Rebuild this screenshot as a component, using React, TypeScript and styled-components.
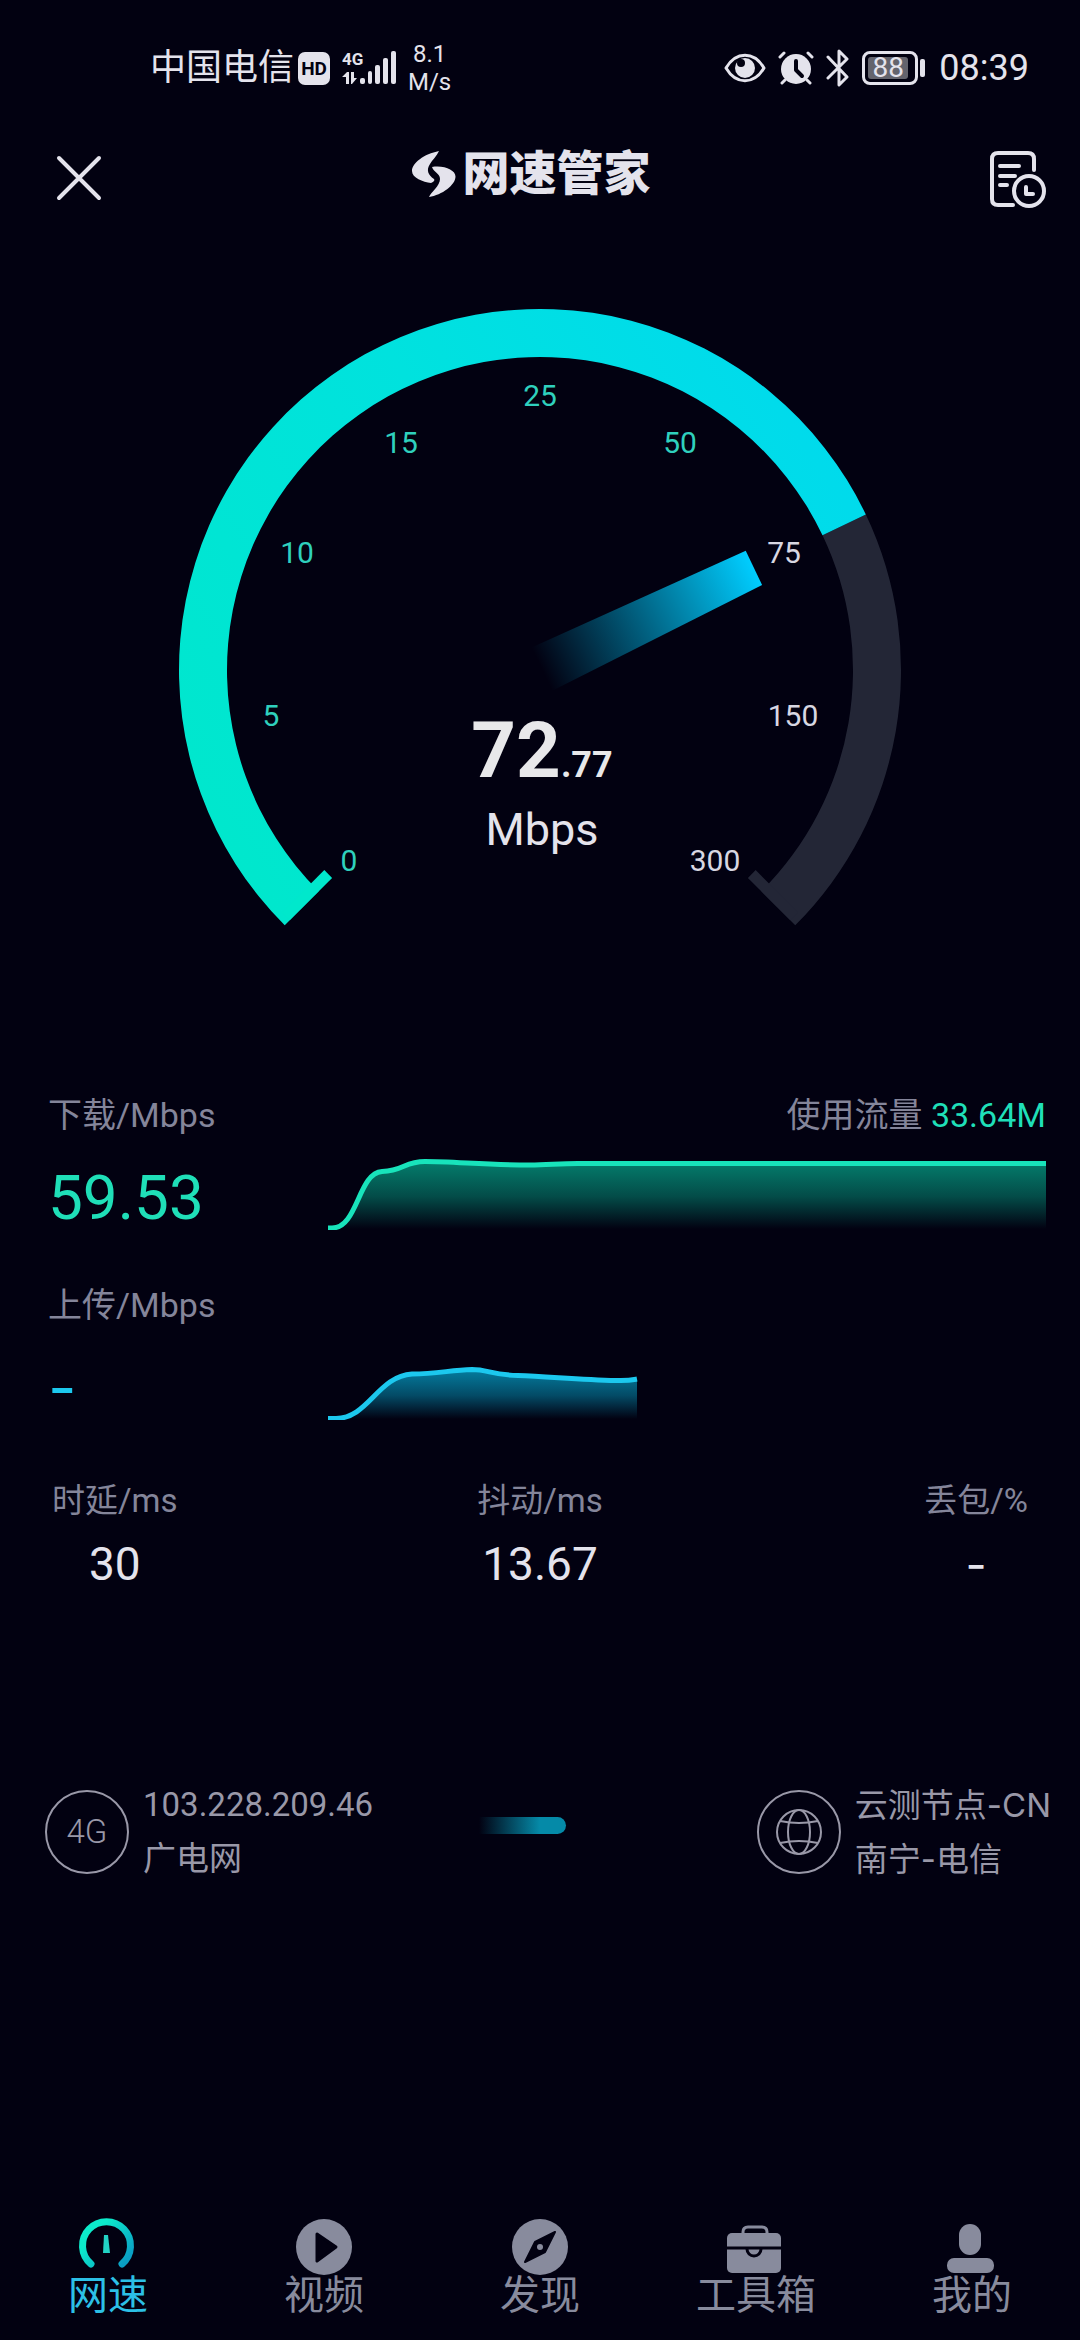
import React from "react";
import styled, { createGlobalStyle } from "styled-components";

const colors = {
  bg: "#020111",
  text: "#e4e3ec",
  muted: "#84859a",
  soft: "#9998a8",
  green: "#1fdfb8",
  blue: "#1cc8ee",
  tick: "#2fd0bd",
  track: "#232636",
};

const sans = `Roboto, "Noto Sans CJK SC", sans-serif`;
const wideDash = `Inter, "Noto Sans CJK SC", sans-serif`;

const GlobalStyle = createGlobalStyle`
  *, *::before, *::after { box-sizing: border-box; }
  body { margin: 0; background: ${colors.bg}; }
  button { font: inherit; color: inherit; background: none; border: 0; padding: 0; cursor: pointer; }
  svg { display: block; }
`;

const Page = styled.div`
  display: flex;
  flex-direction: column;
  min-height: 100vh;
  background: ${colors.bg};
  color: ${colors.text};
  font-family: ${sans};
`;

/* Status bar */

const StatusBar = styled.div`
  display: flex;
  align-items: center;
  justify-content: space-between;
  height: 48px;
  margin-top: 44px;
  padding: 0 51px 0 150px;
`;

const StatusGroup = styled.div<{ $gap: number }>`
  display: flex;
  align-items: center;
  gap: ${(p) => p.$gap}px;
`;

const Carrier = styled.span`
  font-size: 36px;
  line-height: 48px;
`;

const HdBadge = styled.span`
  width: 32px;
  height: 33px;
  border-radius: 7px;
  background: ${colors.text};
  color: ${colors.bg};
  font-size: 19px;
  font-weight: 700;
  line-height: 34px;
  text-align: center;
`;

const NetSpeed = styled.span`
  display: flex;
  flex-direction: column;
  font-size: 24px;
  line-height: 28px;
  text-align: center;
`;

const Battery = styled.span`
  display: flex;
  align-items: center;
  gap: 2px;

  &::after {
    content: "";
    width: 5px;
    height: 18px;
    border-radius: 2px;
    background: ${colors.text};
  }
`;

const BatteryShell = styled.span`
  display: flex;
  width: 56px;
  height: 34px;
  padding: 3px;
  border: 3px solid ${colors.text};
  border-radius: 8px;
`;

const BatteryLevel = styled.span`
  width: 40px;
  border-radius: 3px;
  background: #64646d;
  font-size: 28px;
  line-height: 22px;
  text-align: center;
`;

const Clock = styled.time`
  margin-left: 2px;
  font-size: 36px;
  line-height: 48px;
`;

/* Header */

const Header = styled.header`
  display: grid;
  grid-template-columns: 1fr auto 1fr;
  align-items: start;
  height: 56px;
  margin-top: 58px;
  padding: 0 34px;
`;

const IconButton = styled.button<{ $end?: boolean }>`
  display: flex;
  justify-content: center;
  justify-self: ${(p) => (p.$end ? "end" : "start")};
  width: ${(p) => (p.$end ? 56 : 90)}px;
`;

const Brand = styled.h1`
  display: flex;
  align-items: center;
  gap: 7px;
  margin: 0;
  padding-right: 18px;
  font-size: 47px;
  font-weight: 900;
  line-height: 48px;
`;

/* Gauge */

const GaugeBox = styled.section`
  display: grid;
  width: 100%;
  max-width: 760px;
  margin: 94px auto 0;
`;

const Dial = styled.svg`
  grid-area: 1 / 1;
  width: 100%;
  height: auto;
`;

const TickLabel = styled.text<{ $reached: boolean }>`
  fill: ${(p) => (p.$reached ? colors.tick : "#d8d7e2")};
  font-family: ${sans};
  font-size: 30px;
  text-anchor: middle;
`;

const Reading = styled.div`
  grid-area: 1 / 1;
  align-self: end;
  display: flex;
  flex-direction: column;
  align-items: center;
  gap: 11px;
  padding: 0 0 82px 4px;
`;

const ReadingValue = styled.strong`
  font-size: 78px;
  font-weight: 700;
  line-height: 80px;
  color: #e8e8ea;
`;

const ReadingFraction = styled.span`
  font-size: 36px;
  line-height: 36px;
`;

const ReadingUnit = styled.span`
  font-size: 45px;
  line-height: 56px;
`;

/* Transfer results */

const Transfers = styled.section`
  display: flex;
  flex-direction: column;
  gap: 53px;
  margin-top: 153px;
  padding: 0 34px 0 48px;
`;

const Transfer = styled.div`
  display: grid;
  grid-template-columns: 280px 1fr;
  row-gap: 21px;
`;

const Label = styled.span`
  color: ${colors.muted};
  font-size: 34px;
  line-height: 44px;
  white-space: nowrap;
`;

const Usage = styled(Label)`
  justify-self: end;
`;

const UsageAmount = styled.span`
  color: ${colors.green};
`;

const TransferValue = styled.span<{ $color: string; $empty?: boolean }>`
  align-self: end;
  color: ${(p) => p.$color};
  font-family: ${(p) => (p.$empty ? wideDash : sans)};
  font-size: 62px;
  line-height: 64px;
`;

const Chart = styled.svg`
  grid-column: 2;
  width: 100%;
  height: 72px;
`;

/* Latency metrics */

const Metrics = styled.section`
  display: grid;
  grid-template-columns: 1fr auto 1fr;
  margin-top: 59px;
  padding: 0 52px;
`;

const Metric = styled.div`
  display: flex;
  flex-direction: column;
  align-items: center;
  justify-self: start;
  gap: 13px;

  &:last-child {
    justify-self: end;
  }
`;

const MetricLabel = styled(Label)`
  font-size: 33px;
`;

const MetricValue = styled.span<{ $empty?: boolean }>`
  font-family: ${(p) => (p.$empty ? wideDash : sans)};
  font-size: 46px;
  line-height: 56px;
`;

/* Endpoints */

const Endpoints = styled.section`
  display: grid;
  grid-template-columns: 1fr auto 1fr;
  align-items: center;
  margin: 186px 0 60px;
  padding: 0 29px 0 45px;
`;

const Endpoint = styled.div<{ $end?: boolean }>`
  display: flex;
  align-items: center;
  gap: 14px;
  justify-self: ${(p) => (p.$end ? "end" : "start")};
  color: ${colors.soft};
  font-family: ${(p) => (p.$end ? wideDash : sans)};
  font-size: 33px;
  line-height: 54px;
  white-space: nowrap;
`;

const EndpointBadge = styled.span`
  display: flex;
  align-items: center;
  justify-content: center;
  width: 84px;
  height: 84px;
  border: 2px solid ${colors.soft};
  border-radius: 50%;
  font-weight: 300;
`;

const EndpointText = styled.div`
  display: flex;
  flex-direction: column;
`;

const Pulse = styled.span`
  width: 87px;
  height: 17px;
  margin: 0 51px 14px 0;
  border-radius: 0 9px 9px 0;
  background: linear-gradient(90deg, transparent, #058aa8 70%);
`;

/* Bottom navigation */

const TabBar = styled.nav`
  display: grid;
  grid-template-columns: repeat(5, 1fr);
  margin-top: auto;
  padding-bottom: 23px;
`;

const Tab = styled.button<{ $active?: boolean }>`
  display: flex;
  flex-direction: column;
  align-items: center;
  color: ${(p) => (p.$active ? "#2cc0e6" : "#888b9d")};
  font-size: 40px;
  line-height: 42px;
`;

const TICKS = [
  { value: 0, x: 349, y: 871 },
  { value: 5, x: 271, y: 726 },
  { value: 10, x: 297, y: 563 },
  { value: 15, x: 401, y: 453 },
  { value: 25, x: 540, y: 406 },
  { value: 50, x: 680, y: 453 },
  { value: 75, x: 784, y: 563 },
  { value: 150, x: 793, y: 726 },
  { value: 300, x: 715, y: 871 },
];

const CENTER = { x: 540, y: 670 };
const OUTER = 361;
const INNER = 313;
const SPEED = 72.77;
const NEEDLE_ANGLE = 25.5;

function polar(radius: number, degrees: number) {
  const a = (degrees * Math.PI) / 180;
  return `${CENTER.x + radius * Math.cos(a)} ${CENTER.y - radius * Math.sin(a)}`;
}

function band(from: number, to: number) {
  const large = from - to > 180 ? 1 : 0;
  return [
    `M${polar(OUTER, from)}`,
    `A${OUTER} ${OUTER} 0 ${large} 1 ${polar(OUTER, to)}`,
    `L${polar(INNER, to)}`,
    `A${INNER} ${INNER} 0 ${large} 0 ${polar(INNER, from)}Z`,
  ].join("");
}

function Gauge() {
  return (
    <GaugeBox aria-label="测速仪表盘">
      <Dial viewBox="160 300 760 640" aria-hidden="true">
        <defs>
          <linearGradient id="arc" gradientUnits="userSpaceOnUse" x1="200" y1="925" x2="860" y2="450">
            <stop offset="0" stopColor="#00e8ca" />
            <stop offset="0.6" stopColor="#00e2de" />
            <stop offset="1" stopColor="#00daed" />
          </linearGradient>
          <linearGradient id="needle" gradientUnits="userSpaceOnUse" x1="2" y1="0" x2="237" y2="0">
            <stop offset="0" stopColor="#00cdff" stopOpacity="0" />
            <stop offset="1" stopColor="#00cdff" />
          </linearGradient>
        </defs>
        <g fill={colors.track}>
          <path d={band(NEEDLE_ANGLE, -45)} />
          <rect x="294" y="-11" width="60" height="11" transform={`translate(${CENTER.x} ${CENTER.y}) rotate(45)`} />
        </g>
        <path d={band(225, NEEDLE_ANGLE)} fill="url(#arc)" />
        <rect
          x="294"
          y="0"
          width="60"
          height="11"
          fill="#00e8cc"
          transform={`translate(${CENTER.x} ${CENTER.y}) rotate(135)`}
        />
        <path
          d="M-4 -24L237 -19V19L-4 24Z"
          fill="url(#needle)"
          transform={`translate(${CENTER.x} ${CENTER.y}) rotate(${-NEEDLE_ANGLE})`}
        />
        {TICKS.map((t) => (
          <TickLabel key={t.value} x={t.x} y={t.y} $reached={t.value <= SPEED}>
            {t.value}
          </TickLabel>
        ))}
      </Dial>
      <Reading>
        <ReadingValue>
          72<ReadingFraction>.77</ReadingFraction>
        </ReadingValue>
        <ReadingUnit>Mbps</ReadingUnit>
      </Reading>
    </GaugeBox>
  );
}

function AreaChart(props: { id: string; line: string; color: string; fill: string; top: number }) {
  return (
    <Chart viewBox="0 0 718 72" preserveAspectRatio="none" aria-hidden="true">
      <defs>
        <linearGradient id={props.id} gradientUnits="userSpaceOnUse" x1="0" y1={props.top} x2="0" y2="71">
          <stop offset="0" stopColor={props.fill} stopOpacity="1" />
          <stop offset="0.5" stopColor={props.fill} stopOpacity="0.62" />
          <stop offset="1" stopColor={props.fill} stopOpacity="0" />
        </linearGradient>
      </defs>
      <path d={`${props.line}V72H0Z`} fill={`url(#${props.id})`} />
      <path d={props.line} fill="none" stroke={props.color} strokeWidth="5" />
    </Chart>
  );
}

const downloadLine =
  "M0 70H4C30 70 30 15 54 13.500C76 13 76 3.500 97 3.500C125 3.500 160 7 202 7C220 7 230 5.500 250 5.500H718";
const uploadLine =
  "M0 70.500H8C40 70.500 50 28 84 26C110 26 122 22 144 21.500C160 21.500 164 27 190 27.500C220 28.500 250 31.500 288 32.500C300 33 304 32 309 31";

const SignalIcon = () => (
  <svg width="54" height="36" viewBox="0 0 54 36" fill={colors.text} aria-hidden="true">
    <text x="0" y="15" fontFamily="Roboto, sans-serif" fontSize="17" fontWeight="700">
      4G
    </text>
    <path d="M0 27L5 22H7V34H4V27Z" />
    <path d="M9 22H12V28H15L10 34H9Z" />
    <rect x="18" y="28" width="5" height="6" rx="2" />
    <rect x="26" y="21" width="4" height="13" rx="2" />
    <rect x="33" y="15" width="5" height="19" rx="2" />
    <rect x="41" y="8" width="5" height="26" rx="2" />
    <rect x="49" y="1" width="5" height="33" rx="2" />
  </svg>
);

const EyeIcon = () => (
  <svg width="42" height="30" viewBox="0 0 42 30" aria-hidden="true">
    <path d="M2 15C12 -2 30 -2 40 15C30 32 12 32 2 15Z" fill="none" stroke={colors.text} strokeWidth="3" strokeLinejoin="round" />
    <circle cx="21" cy="15" r="10" fill={colors.text} />
    <circle cx="17" cy="10" r="4" fill={colors.bg} />
  </svg>
);

const AlarmIcon = () => (
  <svg width="36" height="34" viewBox="0 0 36 34" fill="none" strokeLinecap="round" aria-hidden="true">
    <circle cx="18" cy="18" r="15" fill={colors.text} />
    <path d="M2 6L6 2M34 6L30 2M7 29L4 32M29 29L32 32" stroke={colors.text} strokeWidth="3" />
    <path d="M18 10V19L24 25" stroke={colors.bg} strokeWidth="4" strokeLinejoin="round" />
  </svg>
);

const BluetoothIcon = () => (
  <svg width="24" height="38" viewBox="0 0 24 38" fill="none" aria-hidden="true">
    <path d="M2 8L21 28L13 36V2L21 10L2 29" stroke={colors.text} strokeWidth="3" strokeLinecap="round" strokeLinejoin="round" />
  </svg>
);

const CloseIcon = () => (
  <svg width="56" height="56" viewBox="0 0 56 56" aria-hidden="true">
    <path d="M8 8L48 48M48 8L8 48" stroke={colors.text} strokeWidth="4" strokeLinecap="round" />
  </svg>
);

const LogoMark = () => (
  <svg width="44" height="46" viewBox="0 0 44 46" fill={colors.text} aria-hidden="true">
    <path d="M27 0C12 3 0 12 0 20C0 27 11 31 19 32C22 31 23 29 22 28C16 24 14 19 18 13C20 9 25 5 27 0Z" />
    <path d="M20 16C32 14 43.500 19 43.500 25.500C43.500 34 30 44 17 46C19 41 28 35 28 28C28 22 22 22 20 16Z" />
  </svg>
);

const HistoryIcon = () => (
  <svg width="56" height="58" viewBox="0 0 56 58" fill="none" stroke={colors.text} strokeWidth="4" strokeLinecap="round" strokeLinejoin="round" aria-hidden="true">
    <path d="M44 20V9C44 5 42 3 38 3H8C4 3 2 5 2 9V49C2 53 4 55 8 55H23" />
    <path d="M10 16H29M10 26H25M10 35H17" />
    <circle cx="39" cy="41" r="15" />
    <path d="M36 37V44H43" />
  </svg>
);

const GlobeIcon = () => (
  <svg width="46" height="46" viewBox="0 0 46 46" fill="none" stroke={colors.soft} strokeWidth="2" aria-hidden="true">
    <circle cx="23" cy="23" r="22" />
    <ellipse cx="23" cy="23" rx="11" ry="22" />
    <path d="M4 12Q23 16 42 12M4 34Q23 30 42 34" />
  </svg>
);

const SpeedTabIcon = () => (
  <svg width="60" height="60" viewBox="0 0 60 60" fill="none" aria-hidden="true">
    <defs>
      <linearGradient id="tabArc" x1="0" y1="0" x2="1" y2="0.8">
        <stop offset="0.3" stopColor="#0cebcb" />
        <stop offset="1" stopColor="#0a9fc4" />
      </linearGradient>
    </defs>
    <path d="M13 49A24 24 0 1 1 44 49" stroke="url(#tabArc)" strokeWidth="7" strokeLinecap="round" />
    <path d="M26 20H30L32 38H25Z" fill="#22d3c4" />
  </svg>
);

const VideoTabIcon = () => (
  <svg width="60" height="60" viewBox="0 0 60 60" fill="currentColor" aria-hidden="true">
    <circle cx="30" cy="32" r="28" />
    <path d="M23 19L42 32L23 46Z" fill={colors.bg} stroke={colors.bg} strokeWidth="3" strokeLinejoin="round" />
  </svg>
);

const CompassTabIcon = () => (
  <svg width="60" height="60" viewBox="0 0 60 60" fill="currentColor" aria-hidden="true">
    <circle cx="30" cy="32" r="28" />
    <path d="M45 17L25 27L15 47L35 37Z" fill={colors.bg} stroke={colors.bg} strokeWidth="2" strokeLinejoin="round" />
    <circle cx="30" cy="32" r="3" />
  </svg>
);

const ToolboxTabIcon = () => (
  <svg width="60" height="60" viewBox="0 0 60 60" fill="currentColor" aria-hidden="true">
    <path d="M17 19V17Q17 12 22 12H36Q41 12 41 17V19" fill="none" stroke="currentColor" strokeWidth="3" />
    <rect x="1" y="18" width="54" height="40" rx="5" />
    <path d="M1 33H55" stroke={colors.bg} strokeWidth="3" />
    <path d="M21 34A7 7 0 0 0 35 34" fill="none" stroke={colors.bg} strokeWidth="3" />
  </svg>
);

const ProfileTabIcon = () => (
  <svg width="60" height="60" viewBox="0 0 60 60" fill="currentColor" aria-hidden="true">
    <rect x="17" y="9" width="22" height="31" rx="11" />
    <rect x="5" y="43" width="47" height="15" rx="7" />
  </svg>
);

const TABS = [
  { label: "网速", Icon: SpeedTabIcon },
  { label: "视频", Icon: VideoTabIcon },
  { label: "发现", Icon: CompassTabIcon },
  { label: "工具箱", Icon: ToolboxTabIcon },
  { label: "我的", Icon: ProfileTabIcon },
];

const METRICS = [
  { label: "时延/ms", value: "30" },
  { label: "抖动/ms", value: "13.67" },
  { label: "丢包/%", value: "-" },
];

export default function App() {
  return (
    <Page lang="zh-CN">
      <GlobalStyle />
      <StatusBar>
        <StatusGroup $gap={12}>
          <StatusGroup $gap={4}>
            <Carrier>中国电信</Carrier>
            <HdBadge>HD</HdBadge>
          </StatusGroup>
          <SignalIcon />
          <NetSpeed>
            <span>8.1</span>
            <span>M/s</span>
          </NetSpeed>
        </StatusGroup>
        <StatusGroup $gap={12}>
          <EyeIcon />
          <AlarmIcon />
          <BluetoothIcon />
          <Battery>
            <BatteryShell>
              <BatteryLevel>88</BatteryLevel>
            </BatteryShell>
          </Battery>
          <Clock>08:39</Clock>
        </StatusGroup>
      </StatusBar>

      <Header>
        <IconButton type="button" aria-label="关闭">
          <CloseIcon />
        </IconButton>
        <Brand>
          <LogoMark />
          网速管家
        </Brand>
        <IconButton type="button" aria-label="测速记录" $end>
          <HistoryIcon />
        </IconButton>
      </Header>

      <main>
        <Gauge />

        <Transfers>
          <Transfer>
            <Label>下载/Mbps</Label>
            <Usage>
              使用流量 <UsageAmount>33.64M</UsageAmount>
            </Usage>
            <TransferValue $color={colors.green}>59.53</TransferValue>
            <AreaChart id="download" line={downloadLine} color="#18e3bb" fill="#047a6a" top={6} />
          </Transfer>
          <Transfer>
            <Label>上传/Mbps</Label>
            <span />
            <TransferValue $color={colors.blue} $empty>
              -
            </TransferValue>
            <AreaChart id="upload" line={uploadLine} color={colors.blue} fill="#04789a" top={24} />
          </Transfer>
        </Transfers>

        <Metrics>
          {METRICS.map((m) => (
            <Metric key={m.label}>
              <MetricLabel>{m.label}</MetricLabel>
              <MetricValue $empty={m.value === "-"}>{m.value}</MetricValue>
            </Metric>
          ))}
        </Metrics>

        <Endpoints>
          <Endpoint>
            <EndpointBadge>4G</EndpointBadge>
            <EndpointText>
              <span>103.228.209.46</span>
              <span>广电网</span>
            </EndpointText>
          </Endpoint>
          <Pulse />
          <Endpoint $end>
            <EndpointBadge>
              <GlobeIcon />
            </EndpointBadge>
            <EndpointText>
              <span>云测节点-CN</span>
              <span>南宁-电信</span>
            </EndpointText>
          </Endpoint>
        </Endpoints>
      </main>

      <TabBar aria-label="主导航">
        {TABS.map(({ label, Icon }, i) => (
          <Tab key={label} type="button" $active={i === 0} aria-current={i === 0 ? "page" : undefined}>
            <Icon />
            {label}
          </Tab>
        ))}
      </TabBar>
    </Page>
  );
}
